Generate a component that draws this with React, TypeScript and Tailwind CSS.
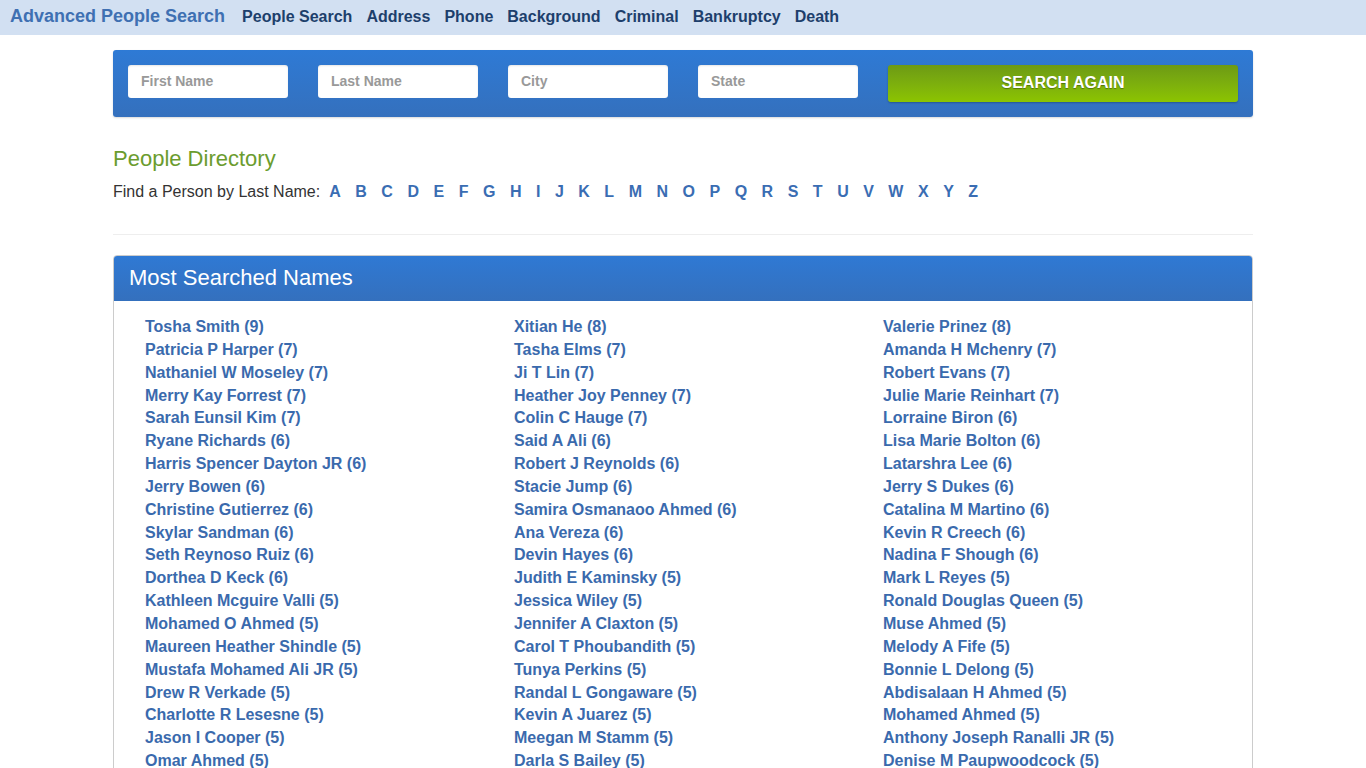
import { ReactNode } from 'react';

const NAV_LINKS = ['People Search', 'Address', 'Phone', 'Background', 'Criminal', 'Bankruptcy', 'Death'];

const LETTERS = 'ABCDEFGHIJKLMNOPQRSTUVWXYZ'.split('');

const COLUMNS: [string, number][][] = [
  [
    ['Tosha Smith', 9],
    ['Patricia P Harper', 7],
    ['Nathaniel W Moseley', 7],
    ['Merry Kay Forrest', 7],
    ['Sarah Eunsil Kim', 7],
    ['Ryane Richards', 6],
    ['Harris Spencer Dayton JR', 6],
    ['Jerry Bowen', 6],
    ['Christine Gutierrez', 6],
    ['Skylar Sandman', 6],
    ['Seth Reynoso Ruiz', 6],
    ['Dorthea D Keck', 6],
    ['Kathleen Mcguire Valli', 5],
    ['Mohamed O Ahmed', 5],
    ['Maureen Heather Shindle', 5],
    ['Mustafa Mohamed Ali JR', 5],
    ['Drew R Verkade', 5],
    ['Charlotte R Lesesne', 5],
    ['Jason I Cooper', 5],
    ['Omar Ahmed', 5],
  ],
  [
    ['Xitian He', 8],
    ['Tasha Elms', 7],
    ['Ji T Lin', 7],
    ['Heather Joy Penney', 7],
    ['Colin C Hauge', 7],
    ['Said A Ali', 6],
    ['Robert J Reynolds', 6],
    ['Stacie Jump', 6],
    ['Samira Osmanaoo Ahmed', 6],
    ['Ana Vereza', 6],
    ['Devin Hayes', 6],
    ['Judith E Kaminsky', 5],
    ['Jessica Wiley', 5],
    ['Jennifer A Claxton', 5],
    ['Carol T Phoubandith', 5],
    ['Tunya Perkins', 5],
    ['Randal L Gongaware', 5],
    ['Kevin A Juarez', 5],
    ['Meegan M Stamm', 5],
    ['Darla S Bailey', 5],
  ],
  [
    ['Valerie Prinez', 8],
    ['Amanda H Mchenry', 7],
    ['Robert Evans', 7],
    ['Julie Marie Reinhart', 7],
    ['Lorraine Biron', 6],
    ['Lisa Marie Bolton', 6],
    ['Latarshra Lee', 6],
    ['Jerry S Dukes', 6],
    ['Catalina M Martino', 6],
    ['Kevin R Creech', 6],
    ['Nadina F Shough', 6],
    ['Mark L Reyes', 5],
    ['Ronald Douglas Queen', 5],
    ['Muse Ahmed', 5],
    ['Melody A Fife', 5],
    ['Bonnie L Delong', 5],
    ['Abdisalaan H Ahmed', 5],
    ['Mohamed Ahmed', 5],
    ['Anthony Joseph Ranalli JR', 5],
    ['Denise M Paupwoodcock', 5],
  ],
];

function Field({ children }: { children: ReactNode }) {
  return (
    <div className="w-[160px] h-[33px] bg-white rounded-[3px] flex items-center pl-[13px] text-[14px] font-bold text-[#999] shadow-[inset_0_1px_2px_rgba(0,0,0,0.1)]">
      {children}
    </div>
  );
}

export default function App() {
  return (
    <div className="min-h-screen bg-white font-['Liberation_Sans',Arial,sans-serif] text-[#333]">
      {/* top bar */}
      <nav className="h-[35px] bg-[#d2e0f2] flex items-center pl-[10px] pb-[2px]">
        <a className="text-[18px] font-bold text-[#3f70b2] mr-[17px]">Advanced People Search</a>
        <div className="flex gap-[14px]">
          {NAV_LINKS.map((l) => (
            <a key={l} className="text-[16px] font-bold text-[#1d3f6c]">
              {l}
            </a>
          ))}
        </div>
      </nav>

      <div className="w-[1140px] mx-auto">
        {/* search again box */}
        <div className="mt-[15px] h-[67px] rounded-[3px] bg-gradient-to-b from-[#2e7ad5] to-[#3470bd] flex items-start p-[15px] gap-[30px] shadow-[0_1px_2px_rgba(0,0,0,0.15)]">
          <Field>First Name</Field>
          <Field>Last Name</Field>
          <Field>City</Field>
          <Field>State</Field>
          <button className="w-[350px] h-[37px] pb-[2px] rounded-[3px] bg-gradient-to-b from-[#6d9a14] to-[#8cc400] text-white font-bold text-[16px] [text-shadow:0_1px_1px_rgba(0,0,0,0.35)] shadow-[0_1px_2px_rgba(0,0,0,0.25)]">
            SEARCH AGAIN
          </button>
        </div>

        {/* directory */}
        <h2 className="mt-[29px] text-[22px] leading-[26px] text-[#6b9c2e]">People Directory</h2>
        <div className="mt-[10px] flex items-center text-[16px] leading-[20px]">
          <span>Find a Person by Last Name:</span>
          <div className="flex ml-[9px] gap-[14.5px]">
            {LETTERS.map((c) => (
              <a key={c} className="font-bold text-[#3a6db3]">
                {c}
              </a>
            ))}
          </div>
        </div>

        <hr className="mt-[32px] border-t border-[#eee]" />

        {/* most searched */}
        <div className="mt-[20px] border border-[#ccc] rounded-t-[4px] overflow-hidden">
          <div className="h-[45px] bg-gradient-to-b from-[#2f79d4] to-[#3470bd] flex items-center pl-[15px] pb-[2px]">
            <h3 className="text-[22px] text-white">Most Searched Names</h3>
          </div>
          <div className="grid grid-cols-[369px_369px_1fr] pl-[31px] pt-[15px] pb-4">
            {COLUMNS.map((col, i) => (
              <ul key={i}>
                {col.map(([name, n]) => (
                  <li key={name} className="leading-[22.85px] text-[16px] font-bold text-[#3a6aad]">
                    {name} ({n})
                  </li>
                ))}
              </ul>
            ))}
          </div>
        </div>
      </div>
    </div>
  );
}
